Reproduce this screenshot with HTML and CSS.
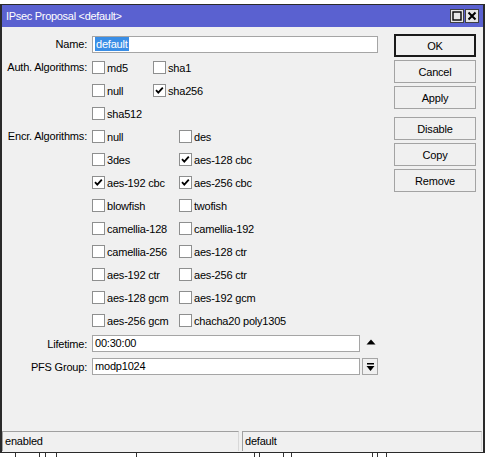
FILE: index.html
```html
<!DOCTYPE html>
<html>
<head>
<meta charset="utf-8">
<link rel="stylesheet" href="styles.css">
</head>
<body>
<div class="window">
  <div class="titlebar">
    <span class="title">IPsec Proposal &lt;default&gt;</span>
    <div class="tbtns">
      <span class="tbtn"><svg width="12" height="12" viewBox="0 0 12 12"><rect x="2" y="2" width="8" height="8" fill="none" stroke="#000" stroke-width="1.4"/></svg></span>
      <span class="tbtn"><svg width="12" height="12" viewBox="0 0 12 12"><path d="M2.5 2.5 L9.5 9.5 M9.5 2.5 L2.5 9.5" stroke="#000" stroke-width="2"/></svg></span>
    </div>
  </div>
  <div class="main">
    <div class="form">
      <div class="row name-row">
        <span class="lbl">Name:</span>
        <div class="input wide"><span class="sel">default</span></div>
      </div>
      <div class="group">
        <span class="lbl glbl">Auth. Algorithms:</span>
        <div class="cbgrid auth">
          <div class="cb"><span class="box"></span>md5</div>
          <div class="cb"><span class="box"></span>sha1</div>
          <div class="cb"><span class="box"></span>null</div>
          <div class="cb"><span class="box"><svg width="11" height="11" viewBox="0 0 11 11"><path d="M2 5.2 L4.3 7.6 L8.8 2.6" fill="none" stroke="#000" stroke-width="1.8"/></svg></span>sha256</div>
          <div class="cb"><span class="box"></span>sha512</div>
        </div>
      </div>
      <div class="group">
        <span class="lbl glbl">Encr. Algorithms:</span>
        <div class="cbgrid encr">
          <div class="cb"><span class="box"></span>null</div>
          <div class="cb"><span class="box"></span>des</div>
          <div class="cb"><span class="box"></span>3des</div>
          <div class="cb"><span class="box"><svg width="11" height="11" viewBox="0 0 11 11"><path d="M2 5.2 L4.3 7.6 L8.8 2.6" fill="none" stroke="#000" stroke-width="1.8"/></svg></span>aes-128 cbc</div>
          <div class="cb"><span class="box"><svg width="11" height="11" viewBox="0 0 11 11"><path d="M2 5.2 L4.3 7.6 L8.8 2.6" fill="none" stroke="#000" stroke-width="1.8"/></svg></span>aes-192 cbc</div>
          <div class="cb"><span class="box"><svg width="11" height="11" viewBox="0 0 11 11"><path d="M2 5.2 L4.3 7.6 L8.8 2.6" fill="none" stroke="#000" stroke-width="1.8"/></svg></span>aes-256 cbc</div>
          <div class="cb"><span class="box"></span>blowfish</div>
          <div class="cb"><span class="box"></span>twofish</div>
          <div class="cb"><span class="box"></span>camellia-128</div>
          <div class="cb"><span class="box"></span>camellia-192</div>
          <div class="cb"><span class="box"></span>camellia-256</div>
          <div class="cb"><span class="box"></span>aes-128 ctr</div>
          <div class="cb"><span class="box"></span>aes-192 ctr</div>
          <div class="cb"><span class="box"></span>aes-256 ctr</div>
          <div class="cb"><span class="box"></span>aes-128 gcm</div>
          <div class="cb"><span class="box"></span>aes-192 gcm</div>
          <div class="cb"><span class="box"></span>aes-256 gcm</div>
          <div class="cb"><span class="box"></span>chacha20 poly1305</div>
        </div>
      </div>
      <div class="row">
        <span class="lbl">Lifetime:</span>
        <div class="input mid">00:30:00</div>
        <span class="uparrow"><svg width="10" height="6" viewBox="0 0 10 6"><path d="M0.5 5.5 L5 0.5 L9.5 5.5 Z" fill="#000"/></svg></span>
      </div>
      <div class="row">
        <span class="lbl">PFS Group:</span>
        <div class="input mid">modp1024</div>
        <span class="ddbtn"><svg width="9" height="10" viewBox="0 0 9 10"><rect x="1" y="1" width="7" height="1.5" fill="#000"/><path d="M0.5 4 L8.5 4 L4.5 9 Z" fill="#000"/></svg></span>
      </div>
    </div>
    <div class="buttons">
      <div class="btn default">OK</div>
      <div class="btn">Cancel</div>
      <div class="btn">Apply</div>
      <div class="btn gap">Disable</div>
      <div class="btn">Copy</div>
      <div class="btn">Remove</div>
    </div>
  </div>
  <div class="statusbar">
    <div class="pane p1">enabled</div>
    <div class="pane p2">default</div>
  </div>
</div>
<div class="under">
  <span class="seg" style="width:16px"></span>
  <span class="seg" style="width:24px"></span>
  <span class="seg" style="width:6px"></span>
  <span class="seg" style="width:11px"></span>
  <span class="seg" style="width:80px"></span>
  <span class="seg" style="width:118px"></span>
  <span class="seg" style="width:5px"></span>
  <span class="seg" style="width:24px"></span>
  <span class="seg" style="width:8px"></span>
  <span class="seg" style="width:81px"></span>
  <span class="seg" style="width:5px"></span>
  <span class="seg" style="width:9px"></span>
</div>
</body>
</html>
```

FILE: styles.css
```css
* { box-sizing: border-box; }
html, body { margin: 0; padding: 0; background: #fff; }
body {
  font-family: "Liberation Sans", Arial, sans-serif;
  font-size: 11px;
  letter-spacing: -0.2px;
  color: #000;
}
.window {
  margin-top: 4px;
  width: 485px;
  height: 449px;
  border-top: 1px solid #2a2a2a;
  border-left: 2px solid #2a2a2a;
  border-right: 2px solid #2a2a2a;
  border-bottom: 1px solid #2a2a2a;
  background: #f0f0f0;
  display: flex;
  flex-direction: column;
}
.titlebar {
  height: 22px;
  background: #5a61d0;
  display: flex;
  align-items: center;
  justify-content: space-between;
  padding-left: 4px;
  padding-right: 4px;
}
.title { color: #fff; font-size: 11px; letter-spacing: -0.3px; }
.tbtns { display: flex; gap: 1px; }
.tbtn {
  width: 14px; height: 14px;
  background: #e6e6e6;
  border: 1px solid #404040;
  display: flex; align-items: center; justify-content: center;
}
.main { display: flex; }
.form { width: 384px; padding-top: 5px; }
.row { display: flex; align-items: center; height: 23px; }
.name-row { height: 24px; }
.lbl {
  width: 85px;
  text-align: right;
  margin-right: 5px;
  flex-shrink: 0;
  white-space: nowrap;
}
.group { display: flex; align-items: flex-start; }
.glbl { line-height: 23px; }
.cbgrid { display: grid; grid-auto-rows: 23px; }
.auth { grid-template-columns: 61px auto; }
.encr { grid-template-columns: 87px auto; }
.cb { display: flex; align-items: center; white-space: nowrap; }
.box {
  width: 13px; height: 13px;
  border: 1px solid #8e8f8f;
  background: #fff;
  margin-right: 2px;
  display: flex; align-items: center; justify-content: center;
}
.input {
  height: 17px;
  background: #fff;
  border: 1px solid #a5a5a5;
  padding-left: 2px;
  line-height: 15px;
  white-space: nowrap;
}
.wide { width: 286px; }
.mid { width: 268px; }
.sel { background: #3a8ee6; color: #fff; padding: 0 1px; display: inline-block; line-height: 14px; }
.uparrow { margin-left: 6px; display: flex; align-items: center; margin-top: -3px; }
.ddbtn {
  margin-left: 2px;
  width: 16px; height: 17px;
  border: 1px solid #a5a5a5;
  display: flex; align-items: center; justify-content: center;
}
.buttons {
  width: 82px;
  margin-left: 8px;
  padding-top: 7px;
  display: flex;
  flex-direction: column;
  gap: 3px;
}
.btn {
  height: 23px;
  border: 1px solid #a3a3a3;
  background: #f0f0f0;
  display: flex; align-items: center; justify-content: center;
}
.btn.default { border: 1px solid #1a1a1a; box-shadow: inset 0 0 0 1px #1a1a1a; }
.btn.gap { margin-top: 5px; }
.statusbar {
  margin-top: auto;
  display: flex;
  gap: 3px;
  padding: 0 1px 1px 0;
}
.pane {
  height: 20px;
  border-top: 1px solid #a0a0a0;
  border-left: 1px solid #a0a0a0;
  border-right: 1px solid #d8d8d8;
  padding-left: 2px;
  line-height: 18px;
}
.p1 { width: 237px; }
.p2 { flex: 1; }
.under { display: flex; height: 4px; }
.seg { height: 4px; border-right: 1px solid #333; flex-shrink: 0; }
```
